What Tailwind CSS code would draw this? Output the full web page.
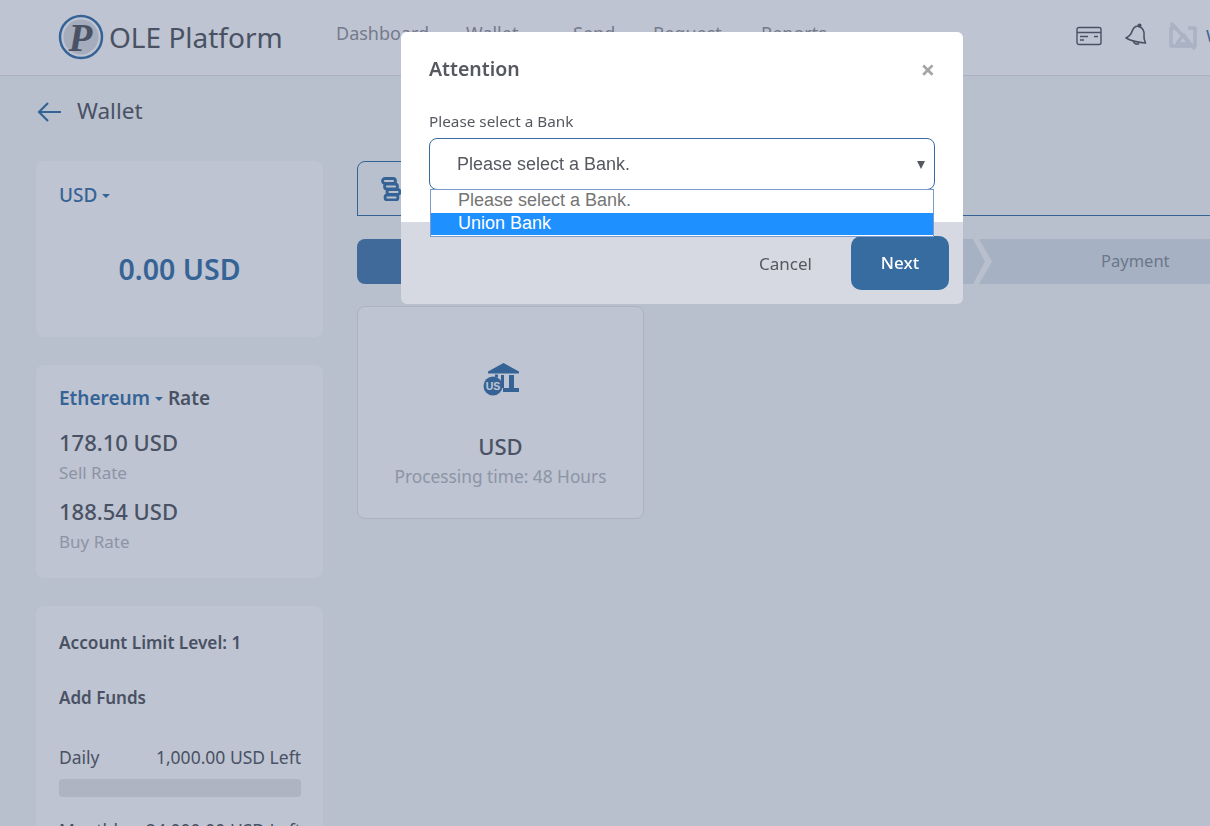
<!DOCTYPE html>
<html lang="en">
  <head>
    <meta charset="UTF-8" />
    <meta name="viewport" content="width=device-width, initial-scale=1.0" />
    <title>OLE Platform - Wallet</title>
    <script src="https://cdn.jsdelivr.net/npm/@tailwindcss/browser@4"></script>
  </head>
  <body class="h-screen overflow-hidden bg-[#f7f8f9] font-['Noto_Sans',sans-serif] text-[#585b63]">
    <!-- Navbar -->
    <header class="flex h-[76px] items-start overflow-hidden border-b border-[#e4e4eb] bg-white">
      <div class="ml-[58px] mt-[14px] flex w-[278px] shrink-0 items-center">
        <svg width="46" height="46" viewBox="0 0 46 46" class="shrink-0">
          <circle cx="23" cy="23" r="21" fill="#fff" stroke="#3c75ab" stroke-width="2.5" />
          <circle cx="23" cy="23" r="17.5" fill="#dcdde0" />
          <text x="22.5" y="37" text-anchor="middle" font-family="Liberation Serif" font-style="italic" font-weight="700" font-size="39" fill="#5a5d66">P</text>
        </svg>
        <span class="ml-[5px] whitespace-nowrap text-[28px] leading-none text-[#585b63]">OLE Platform</span>
      </div>
      <nav class="mt-[21px] flex w-[740px] shrink-0 text-[18px] leading-6 text-[#97979c]">
        <span class="w-[130px]">Dashboard</span>
        <span class="w-[107px]">Wallet</span>
        <span class="w-[80px]">Send</span>
        <span class="w-[108px]">Request</span>
        <span>Reports</span>
      </nav>
      <div class="mt-[22px] flex shrink-0 items-center whitespace-nowrap">
        <svg width="26" height="20" viewBox="0 0 26 20" fill="none" stroke="#585b63" stroke-width="1.4">
          <rect x="1" y="1.5" width="24" height="17" rx="2" />
          <path d="M1 6.5h24M4 10.5h8M18 10.5h4M4 14h4" />
        </svg>
        <svg class="ml-[22px]" width="24" height="26" viewBox="0 0 24 26" fill="none" stroke="#585b63" stroke-width="1.6" stroke-linejoin="round">
          <path d="M15 3.500c4 1.500 5.500 5 5 9-.3 2.500.3 5 1.500 7.500-5-.3-14-2-19.500-5 3-1.500 5-3.500 6-6.500 1.200-3.500 3.500-6 7-5z" />
          <circle cx="15.500" cy="2.500" r="1.300" fill="#585b63" />
          <path d="M9.500 18.500c.3 2 3 3.500 5.500 2" />
        </svg>
        <svg class="ml-[20px]" width="30" height="28" viewBox="0 0 30 28" fill="none" stroke="#e2e5ec" stroke-width="3.500" stroke-linejoin="round">
          <path d="M9 6H3v18h24V6h-7M3 1l24 26" />
          <path d="M9 21.500l6.500-9 6.500 9z" stroke-width="3" />
        </svg>
        <span class="ml-[8px] text-[17px] text-[#3c75ab]">Welcome</span>
      </div>
    </header>

    <!-- Page title -->
    <div class="ml-[37px] mt-[20px] flex h-[30px] items-center">
      <svg width="25" height="22" viewBox="0 0 25 22" fill="none" stroke="#3c75ab" stroke-width="2.200" class="mt-[2px]">
        <path d="M24 11H2M11 2l-9 9 9 9" />
      </svg>
      <span class="ml-[15px] text-[22.500px] leading-none">Wallet</span>
    </div>

    <div class="ml-[36px] mt-[35px] flex items-start gap-[34px]">
      <!-- Sidebar -->
      <aside class="flex w-[287px] shrink-0 flex-col gap-[28px]">
        <div class="h-[176px] rounded-lg bg-white px-[23px] pt-[22px]">
          <div class="flex items-center text-[19px] font-medium leading-6 text-[#3c75ab]">
            USD
            <span class="ml-[5px] mt-[2px] border-x-[4px] border-t-[4px] border-x-transparent border-t-[#3c75ab]"></span>
          </div>
          <p class="mt-[44px] text-center text-[28.500px] font-semibold leading-9 text-[#3c75ab]">0.00 USD</p>
        </div>

        <div class="h-[213px] rounded-lg bg-white px-[23px] pt-[21px]">
          <div class="flex items-center text-[19px] font-semibold leading-6 text-[#3c75ab]">
            Ethereum
            <span class="mx-[5px] mt-[2px] border-x-[4px] border-t-[4px] border-x-transparent border-t-[#3c75ab]"></span>
            <span class="text-[#585b63]">Rate</span>
          </div>
          <p class="mt-[18px] text-[22px] font-medium leading-7">178.10 USD</p>
          <p class="mt-[3px] text-[17px] leading-7 text-[#b8bbc2]">Sell Rate</p>
          <p class="mt-[10px] text-[22px] font-medium leading-7">188.54 USD</p>
          <p class="mt-[3px] text-[17px] leading-7 text-[#b8bbc2]">Buy Rate</p>
        </div>

        <div class="h-[260px] rounded-lg bg-white pl-[23px] pr-[22px] pt-[26px]">
          <p class="text-[17.200px] font-semibold leading-[22px]">Account Limit Level: 1</p>
          <p class="mt-[33px] text-[17px] font-semibold leading-[22px]">Add Funds</p>
          <div class="mt-[37px] flex justify-between text-[17.500px] leading-[22px]">
            <span>Daily</span>
            <span>1,000.00 USD Left</span>
          </div>
          <div class="mt-[11px] h-[18px] rounded bg-[#e8e9e8]"></div>
          <div class="mt-[22px] flex justify-between text-[17.500px] leading-[22px]">
            <span>Monthly</span>
            <span>24,000.00 USD Left</span>
          </div>
        </div>
      </aside>

      <!-- Main Content -->
      <main class="min-w-0 flex-1">
        <div class="h-[55px] border-b border-[#3c75ab]">
          <div class="flex h-[55px] w-[200px] items-center rounded-tl-lg border border-[#3c75ab] pl-[23px]">
            <svg width="20" height="24" viewBox="0 0 20 24" fill="none" stroke="#3c75ab" stroke-width="2.800">
              <rect x="1.500" y="1.500" width="13" height="5" rx="2.500" />
              <rect x="3.500" y="7" width="13" height="5" rx="2.500" />
              <rect x="6" y="12.500" width="13" height="5" rx="2.500" />
              <rect x="4" y="18" width="13" height="5" rx="2.500" />
            </svg>
          </div>
        </div>

        <!-- Steps -->
        <div class="mt-[23px] flex h-[45px] text-[16.500px]">
          <div class="w-[250px] shrink-0 rounded-l-lg bg-[#4a7faf] [clip-path:polygon(0_0,96%_0,100%_50%,96%_100%,0_100%)]"></div>
          <div class="-ml-[7px] w-[385px] shrink-0 bg-[#dde6eb] [clip-path:polygon(0_0,calc(100%-12px)_0,100%_50%,calc(100%-12px)_100%,0_100%,12px_50%)]"></div>
          <div class="-ml-[6px] flex h-[45px] w-[240px] shrink-0 items-center bg-[#dde6eb] pl-[122px] text-[#8a909c] [clip-path:polygon(0_0,100%_0,100%_100%,0_100%,13px_50%)]">Payment</div>
        </div>

        <div class="mt-[22px] flex h-[213px] w-[287px] flex-col items-center rounded-lg border border-[#e3e6ec] bg-white pt-[55px]">
          <svg width="40" height="34" viewBox="0 0 40 34">
            <path d="M7 9.500 22.500 1 38 9.500v2H7z" fill="#3c75ab" />
            <path d="M20 13h3v13h-3zM28 13h5v13h-5zM14 12.500h3v3h-3z" fill="#3c75ab" />
            <path d="M22 26h16v4H22z" fill="#3c75ab" />
            <circle cx="12" cy="24" r="9.500" fill="#3c75ab" />
            <text x="12" y="28" text-anchor="middle" font-family="Liberation Sans" font-weight="700" font-size="10.500" fill="#fff">US</text>
          </svg>
          <p class="mt-[36px] text-[22px] font-medium leading-7">USD</p>
          <p class="mt-[3px] text-[17.300px] leading-7 text-[#b8bbc2]">Processing time: 48 Hours</p>
        </div>
      </main>
    </div>

    <!-- Modal overlay -->
    <div class="fixed inset-0 bg-[#293d66]/30"></div>

    <!-- Bank modal -->
    <div class="fixed left-[401px] top-[32px] h-[272px] w-[562px] overflow-hidden rounded-md bg-[#d6d9e1] text-[#55585f]">
      <div class="h-[190px] bg-white px-[28px] pt-[24px]">
        <div class="flex items-center justify-between">
          <h2 class="text-[19.500px] font-semibold leading-[26px]">Attention</h2>
          <span class="text-[25px] font-bold leading-[26px] text-[#a5a5a5]">×</span>
        </div>
        <p class="mt-[29px] text-[15.300px] leading-5">Please select a Bank</p>
        <div class="mt-[7px] flex h-[52px] w-[506px] items-center justify-between rounded-lg border border-[#366c9f] pl-[27px] pr-[9px] font-['Liberation_Sans',sans-serif] text-[18px]">
          <span>Please select a Bank.</span>
          <span class="mt-[1px] border-x-[4.500px] border-t-[8px] border-x-transparent border-t-[#55585f]"></span>
        </div>
      </div>
      <div class="mt-[14px] flex h-[54px] items-center justify-end gap-[39px] pr-[14px]">
        <button class="pt-[2px] text-[17px] leading-[26px]">Cancel</button>
        <button class="h-[54px] w-[98px] rounded-[10px] bg-[#366c9f] text-[17px] font-medium text-white">Next</button>
      </div>
    </div>

    <!-- Open select list -->
    <div class="fixed left-[430px] top-[189px] h-[48px] w-[504px] border border-[#7b9bcf] bg-white font-['Liberation_Sans',sans-serif] text-[18px] leading-[21px]">
      <div class="h-[23px] pl-[27px] text-[#757575]">Please select a Bank.</div>
      <div class="h-[22px] bg-[#1e90ff] pl-[27px] text-white">Union Bank</div>
    </div>
  </body>
</html>
